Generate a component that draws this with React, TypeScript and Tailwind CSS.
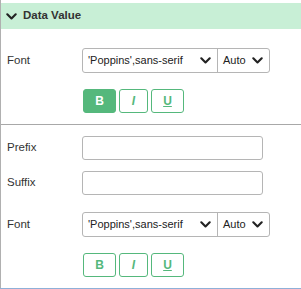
import React from "react";

const Chevron = () => (
	<svg width="11" height="7" viewBox="0 0 11 7" fill="none">
		<path d="M1.3 1.3 L5.5 5.5 L9.7 1.3" stroke="#222" strokeWidth="2.1" strokeLinecap="round" strokeLinejoin="round" />
	</svg>
);

const FontRow = () => (
	<div className="flex items-center">
		<div className="w-[81px] pl-[6px] text-[11.5px] text-[#333]">Font</div>
		<div className="flex h-[25px] w-[188px] rounded-[3px] border border-[#b5b5b5] bg-white text-[11px] text-[#222]">
			<div className="flex w-[135px] items-center justify-between border-r border-[#b5b5b5] pl-[5px] pr-[6px]">
				<span>'Poppins',sans-serif</span>
				<Chevron />
			</div>
			<div className="flex flex-1 items-center justify-between pl-[5px] pr-[6px]">
				<span>Auto</span>
				<Chevron />
			</div>
		</div>
	</div>
);

const StyleButtons = ({ boldActive }: { boldActive: boolean }) => (
	<div className="flex gap-[3px] pl-[82px]">
		<div
			className={`flex h-[24px] w-[33px] items-center justify-center rounded-[3px] border border-[#55b87c] text-[12px] font-bold ${
				boldActive ? "bg-[#55b87c] text-white" : "bg-white text-[#55b87c]"
			}`}
		>
			B
		</div>
		<div className="flex h-[24px] w-[29px] items-center justify-center rounded-[3px] border border-[#55b87c] bg-white text-[12px] font-bold italic text-[#55b87c]">
			I
		</div>
		<div className="flex h-[24px] w-[33px] items-center justify-center rounded-[3px] border border-[#55b87c] bg-white text-[12px] font-bold text-[#55b87c] underline">
			U
		</div>
	</div>
);

const TextRow = ({ label }: { label: string }) => (
	<div className="flex items-center">
		<div className="w-[81px] pl-[6px] text-[11.5px] text-[#333]">{label}</div>
		<div className="h-[24px] w-[181px] rounded-[3px] border border-[#b5b5b5] bg-white" />
	</div>
);

const App: React.FC = () => {
	return (
		<div className="h-[289px] w-[301px] overflow-hidden bg-white" style={{ fontFamily: "'Liberation Sans', Arial, sans-serif" }}>
			<div className="flex h-[288px] flex-col border-l border-[#b0b0b0]">
				<div className="mt-[3px] flex h-[26px] items-center gap-[6px] bg-[#c8efd6] pl-[5px] text-[11.5px] font-bold text-[#333]">
					<Chevron />
					<span>Data Value</span>
				</div>
				<div className="pt-[19px]">
					<FontRow />
				</div>
				<div className="pt-[16px]">
					<StyleButtons boldActive />
				</div>
				<div className="mt-[11px] border-t border-[#a8a8a8]" />
				<div className="flex flex-col gap-[11px] pt-[11px]">
					<TextRow label="Prefix" />
					<TextRow label="Suffix" />
				</div>
				<div className="pt-[17px]">
					<FontRow />
				</div>
				<div className="pt-[16px]">
					<StyleButtons boldActive={false} />
				</div>
			</div>
			<div className="h-[1px] bg-[#8fb0d8]" />
		</div>
	);
};

export default App;
